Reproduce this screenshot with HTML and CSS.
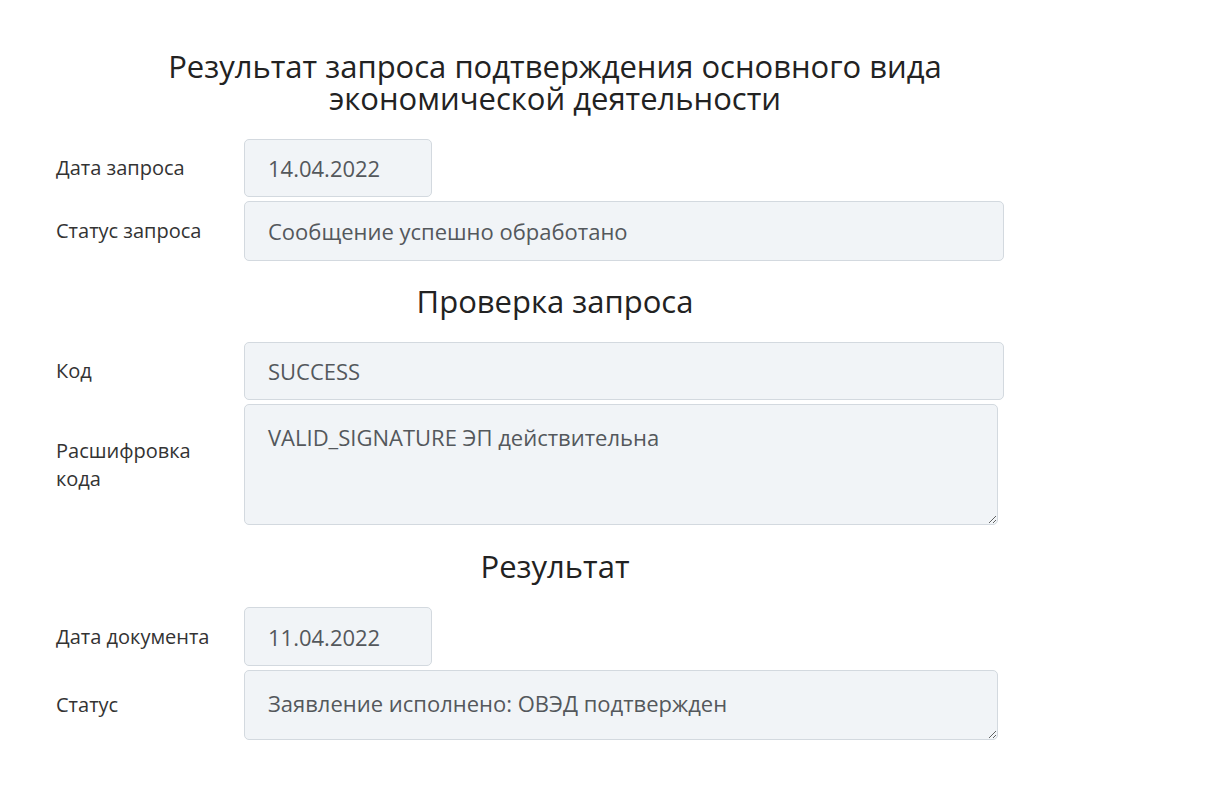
FILE: index.html
```html
<!DOCTYPE html>
<html lang="ru">
<head>
<meta charset="utf-8">
<title>Результат запроса</title>
<link rel="stylesheet" href="styles.css">
</head>
<body>
<main class="page">
  <h1 class="title">Результат запроса подтверждения основного вида экономической деятельности</h1>
  <div class="form">
    <label class="label">Дата запроса</label>
    <div class="field"><input class="input input-short" readonly value="14.04.2022"></div>
    <label class="label">Статус запроса</label>
    <div class="field"><input class="input input-tall" readonly value="Сообщение успешно обработано"></div>
  </div>
  <h2 class="section">Проверка запроса</h2>
  <div class="form">
    <label class="label">Код</label>
    <div class="field"><input class="input" readonly value="SUCCESS"></div>
    <label class="label">Расшифровка кода</label>
    <div class="field"><textarea class="input area area-tall" readonly>VALID_SIGNATURE ЭП действительна</textarea></div>
  </div>
  <h2 class="section section-last">Результат</h2>
  <div class="form">
    <label class="label">Дата документа</label>
    <div class="field"><input class="input input-short input-doc" readonly value="11.04.2022"></div>
    <label class="label">Статус</label>
    <div class="field"><textarea class="input area area-short" readonly>Заявление исполнено: ОВЭД подтвержден</textarea></div>
  </div>
</main>
</body>
</html>
```

FILE: styles.css
```css
html, body {
  margin: 0;
  padding: 0;
  background: #ffffff;
}
body {
  font-family: "Open Sans", "Noto Sans", sans-serif;
  color: #333333;
}
.page {
  width: 998px;
  padding: 50px 0 40px 56px;
}
.title {
  margin: 0 auto 25px;
  width: 820px;
  text-align: center;
  font-size: 31px;
  font-weight: 400;
  line-height: 32px;
  color: #222222;
}
.section {
  margin: 20px 0 21px;
  text-align: center;
  font-size: 31px;
  font-weight: 400;
  line-height: 40px;
  color: #222222;
}
.section-last {
  margin-top: 21px;
  margin-bottom: 21px;
}
.form {
  display: grid;
  grid-template-columns: 188px 760px;
  row-gap: 4px;
  align-items: center;
}
.label {
  font-size: 20px;
  line-height: 28px;
  color: #333333;
  padding-right: 20px;
}
.field {
  display: flex;
}
.input {
  box-sizing: border-box;
  width: 760px;
  height: 58px;
  margin: 0;
  padding: 13px 23px;
  font-family: "Open Sans", "Noto Sans", sans-serif;
  font-size: 22px;
  line-height: 30px;
  color: #54585c;
  background: #f1f4f7;
  border: 1px solid #d3d9df;
  border-radius: 5px;
  outline: none;
}
.input-short {
  width: 188px;
}
.input-tall {
  height: 60px;
}
.input-doc {
  height: 59px;
}
.area {
  width: 754px;
  padding-top: 17px;
  resize: vertical;
}
.area-tall {
  height: 121px;
}
.area-short {
  height: 70px;
}
```
